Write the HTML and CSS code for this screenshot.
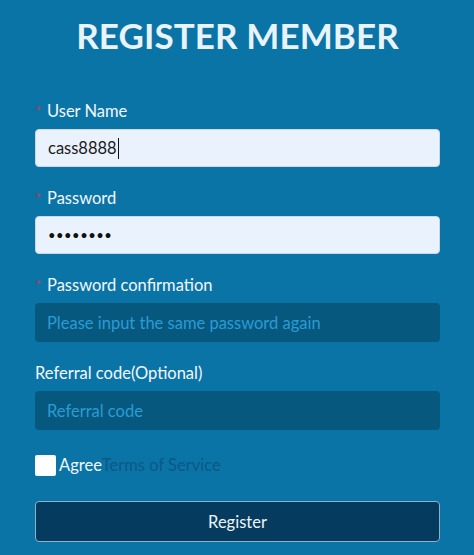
FILE: index.html
```html
<!DOCTYPE html>
<html lang="en">
<head>
<meta charset="utf-8">
<title>Register Member</title>
<link rel="stylesheet" href="styles.css">
</head>
<body>
<main class="page">
  <h1 class="title">REGISTER MEMBER</h1>
  <form class="form">
    <div class="field">
      <label class="label"><span class="req">*</span>User Name</label>
      <div class="input light">cass8888<span class="caret"></span></div>
    </div>
    <div class="field">
      <label class="label"><span class="req">*</span>Password</label>
      <div class="input light dots">••••••••</div>
    </div>
    <div class="field">
      <label class="label"><span class="req">*</span>Password confirmation</label>
      <div class="input dark">Please input the same password again</div>
    </div>
    <div class="field">
      <label class="label">Referral code(Optional)</label>
      <div class="input dark">Referral code</div>
    </div>
    <div class="agree">
      <span class="box"></span>
      <span class="agree-text">Agree</span><span class="terms">Terms of Service</span>
    </div>
    <button type="button" class="btn">Register</button>
  </form>
</main>
</body>
</html>
```
FILE: styles.css
```css
html, body {
  margin: 0;
  padding: 0;
}
body {
  background: #0b74a6;
  font-family: Lato, "Open Sans", sans-serif;
  color: #f2f7fc;
  width: 474px;
  height: 555px;
  overflow: hidden;
}
.page {
  padding: 10px 34px 0 35px;
}
.title {
  margin: 0;
  text-align: center;
  font-size: 35px;
  font-weight: 700;
  color: #e9f3fb;
  line-height: 50px;
  letter-spacing: 0.1px;
}
.form {
  margin-top: 40px;
  display: flex;
  flex-direction: column;
}
.field {
  display: flex;
  flex-direction: column;
  gap: 7px;
  margin-bottom: 20px;
}
.label {
  font-size: 16.5px;
  line-height: 22px;
  color: #f2f7fc;
  display: flex;
  align-items: center;
}
.req {
  color: #b8375a;
  width: 12px;
  font-size: 14px;
  margin-left: 0;
}
.input {
  height: 38px;
  border-radius: 4px;
  box-sizing: border-box;
  padding: 0 12px;
  font-size: 16.5px;
  display: flex;
  align-items: center;
}
.light {
  background: #eaf2fd;
  color: #1b1b1b;
  border: 1px solid #c8d8e8;
}
.caret {
  display: inline-block;
  width: 1px;
  height: 21px;
  background: #111;
  margin-left: 1px;
}
.dots {
  font-size: 13px;
  letter-spacing: 0.5px;
  color: #111;
}
.dark {
  background: #07587f;
  color: #2a9cd4;
  height: 39px;
}
.agree {
  display: flex;
  align-items: center;
  height: 22px;
  margin-top: 4px;
  font-size: 16.5px;
}
.box {
  width: 21px;
  height: 21px;
  background: #ffffff;
  border-radius: 2px;
  margin-right: 3px;
}
.agree-text {
  color: #f2f7fc;
}
.terms {
  color: #0d5884;
}
.btn {
  margin-top: 25px;
  height: 41px;
  background: #043b5e;
  color: #eef4fa;
  border: 1.5px solid #8db2cc;
  border-radius: 4px;
  font-family: Lato, "Open Sans", sans-serif;
  font-size: 16.5px;
}
```
